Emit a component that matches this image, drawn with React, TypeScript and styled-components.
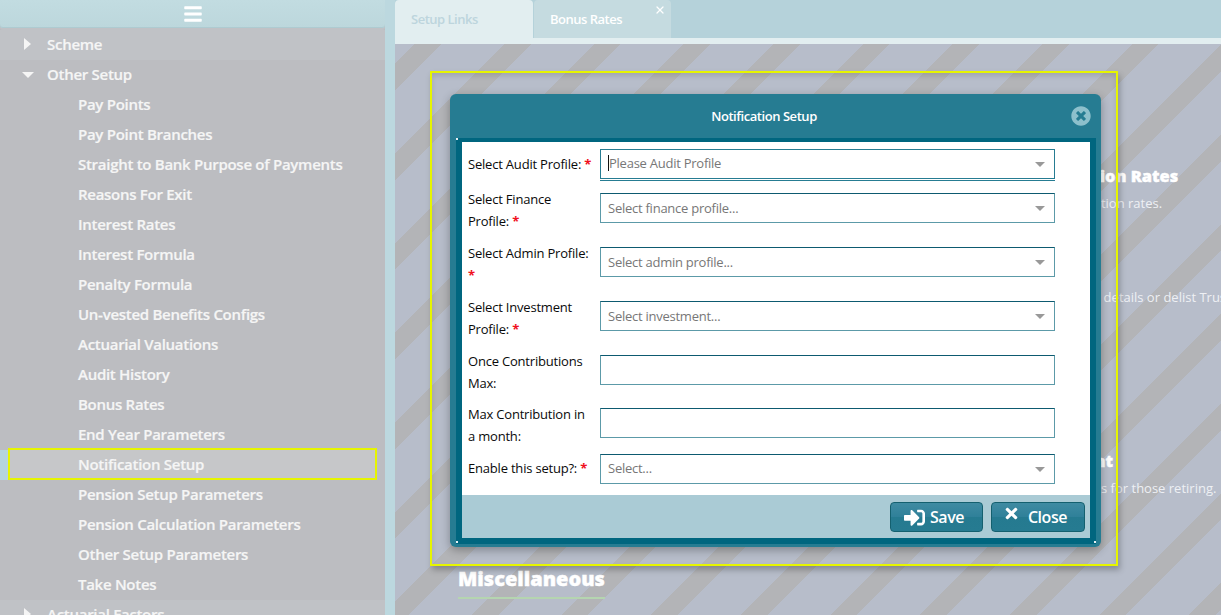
import React from "react";
import styled, { createGlobalStyle } from "styled-components";
import { FaBars, FaSignInAlt, FaTimes, FaTimesCircle } from "react-icons/fa";
import { X } from "lucide-react";

const GlobalStyle = createGlobalStyle`
  html, body {
    margin: 0;
    height: 100%;
    overflow: hidden;
    font-family: "Open Sans", "Liberation Sans", sans-serif;
  }
`;

const Page = styled.div`
  position: relative;
  display: flex;
  width: 100%;
  height: 100vh;
  overflow: hidden;
  background: #bcd8df;
`;

const Sidebar = styled.aside`
  width: 385px;
  flex: none;
  background: #bcbdc1;
  overflow: hidden;
`;

const SidebarHeader = styled.div`
  height: 28px;
  margin-bottom: 2px;
  display: flex;
  align-items: center;
  justify-content: center;
  color: #fff;
  font-size: 20px;
  background: linear-gradient(#c2dce1, #bcd7dc);
  border-radius: 0 0 3px 3px;
  box-shadow: inset 0 -1px 0 #aecbd1, 0 2px 0 #c0c2c6;
`;

const TreeRow = styled.div<{ $top?: boolean; $active?: boolean }>`
  position: relative;
  height: 30px;
  box-sizing: border-box;
  display: flex;
  align-items: center;
  padding-left: ${(p) => (p.$top ? "47px" : "78px")};
  padding-bottom: 2px;
  background: ${(p) =>
    p.$active
      ? "linear-gradient(to right, #b5d5dc 8px, #c6c7c9 8px, #c6c7c9 377px, transparent 377px)"
      : p.$top
        ? "#c0c2c6"
        : "transparent"};
  color: #f5f5f5;
  font-size: 15px;
  font-weight: 600;
  letter-spacing: -0.28px;
  -webkit-text-stroke: 0.2px #f5f5f5;
  white-space: nowrap;
`;

const OpenRow = styled(TreeRow)`
  background: transparent;
`;

const ArrowRight = styled.span`
  position: absolute;
  left: 24px;
  top: 8px;
  border-left: 7px solid #f5f5f5;
  border-top: 6px solid transparent;
  border-bottom: 6px solid transparent;
`;

const ArrowDown = styled.span`
  position: absolute;
  left: 22px;
  top: 12px;
  border-top: 6px solid #f5f5f5;
  border-left: 6px solid transparent;
  border-right: 6px solid transparent;
`;

const RowMarker = styled.span`
  position: absolute;
  left: 8px;
  right: 8px;
  top: -2px;
  bottom: 0;
  border: 2px solid #e6f500;
`;

const Main = styled.main`
  flex: 1;
  min-width: 0;
  margin-left: 10px;
  display: flex;
  flex-direction: column;
`;

const TabBar = styled.div`
  height: 38px;
  flex: none;
  display: flex;
  background: #b5d2da;
`;

const Tab = styled.div<{ $active?: boolean }>`
  position: relative;
  width: ${(p) => (p.$active ? "138px" : "137px")};
  margin-right: ${(p) => (p.$active ? "1px" : "0")};
  padding-left: 16px;
  box-sizing: border-box;
  display: flex;
  align-items: center;
  font-size: 13px;
  font-weight: 600;
  letter-spacing: -0.5px;
  color: ${(p) => (p.$active ? "#bdd5dd" : "#fff")};
  background: ${(p) => (p.$active ? "#e2eef0" : "#c5dbe0")};
  border-radius: 4px 4px 0 0;
`;

const TabClose = styled.span`
  position: absolute;
  right: 5px;
  top: 4px;
  color: #fff;
  display: flex;
`;

const TabStrip = styled.div`
  height: 6px;
  flex: none;
  background: #e2eef0;
`;

const Canvas = styled.div`
  flex: 1;
  display: grid;
  grid-template-columns: 560px 1fr;
  padding-left: 63px;
  background-color: #b7bdca;
  background-image: repeating-linear-gradient(
    135deg,
    transparent 0 14px,
    #b3b4b7 14px 33px,
    transparent 33px 63.4px
  );
`;

const CanvasColumn = styled.div`
  display: flex;
  flex-direction: column;
  white-space: nowrap;
`;

const Section = styled.section<{ $top: number }>`
  padding-top: ${(p) => p.$top}px;
`;

const SectionTitle = styled.h3`
  margin: 0 0 8px;
  font-size: 16.4px;
  line-height: 20px;
  font-weight: 800;
  color: #fff;
  -webkit-text-stroke: 0.4px #fff;
`;

const SectionText = styled.p`
  margin: 0;
  font-size: 13px;
  line-height: 18px;
  color: #eef0f4;
`;

const GroupTitle = styled.h2`
  display: inline-block;
  margin: 0;
  padding-bottom: 4px;
  font-size: 20px;
  line-height: 28px;
  font-weight: 800;
  color: #fff;
  -webkit-text-stroke: 0.4px #fff;
  border-bottom: 2px solid #b5d5b0;
`;

const MarkerFrame = styled.div`
  position: absolute;
  left: 430px;
  top: 71px;
  width: 688px;
  height: 495px;
  box-sizing: border-box;
  border: 2px solid #e6f500;
  box-shadow: 2px 4px 6px rgba(0, 0, 0, 0.25), inset 0 3px 5px rgba(0, 0, 0, 0.12);
`;

const Dialog = styled.div`
  position: absolute;
  left: 450px;
  top: 94px;
  width: 651px;
  height: 453px;
  box-sizing: border-box;
  padding: 0 5px 3px 6px;
  display: flex;
  flex-direction: column;
  background: #267c92;
  border-radius: 6px;
  box-shadow: 0 3px 10px rgba(0, 0, 0, 0.3);
`;

const DialogHeader = styled.div`
  position: relative;
  height: 44px;
  flex: none;
  display: flex;
  align-items: center;
  justify-content: center;
  padding-right: 24px;
  color: #fff;
  font-size: 13px;
  font-weight: 600;
  letter-spacing: -0.45px;
`;

const DialogClose = styled.span`
  position: absolute;
  right: 5px;
  top: 12px;
  display: flex;
  font-size: 20px;
  color: #8dc0cc;
`;

const DialogFrame = styled.div`
  position: relative;
  flex: 1;
  display: flex;
  flex-direction: column;
  border: solid #00667f;
  border-width: 4px 6px 6px 6px;
  background: #fff;
`;

const CornerDot = styled.span<{ $corner: "tl" | "bl" | "br" }>`
  position: absolute;
  width: 2px;
  height: 2px;
  background: #e8f1f3;
  ${(p) => (p.$corner === "br" ? "right: -6px;" : "left: -6px;")}
  ${(p) => (p.$corner === "tl" ? "top: -4px;" : "bottom: -5px;")}
`;

const FormBody = styled.div`
  flex: 1;
  padding: 7px 0 0 6px;
`;

const FieldRow = styled.div<{ $height: number }>`
  height: ${(p) => p.$height}px;
  display: grid;
  grid-template-columns: 125px 455px;
  column-gap: 7px;
`;

const FieldLabel = styled.label<{ $offset: number }>`
  font-size: 13px;
  line-height: 22px;
  font-weight: 500;
  letter-spacing: -0.2px;
  color: #0a0a0a;
  margin-top: ${(p) => p.$offset}px;
`;

const Required = styled.span`
  color: #f01020;
  font-weight: 700;
`;

const FieldBox = styled.div<{ $focus?: boolean; $offset?: number; $lift: number }>`
  position: relative;
  height: 30px;
  margin-top: ${(p) => p.$offset ?? 0}px;
  box-sizing: border-box;
  display: flex;
  align-items: center;
  padding: 0 0 ${(p) => p.$lift}px 7px;
  font-size: 13px;
  letter-spacing: -0.25px;
  color: #777;
  border: 1px solid ${(p) => (p.$focus ? "#267c92" : "#5c9aa8")};
  border-top-color: ${(p) => (p.$focus ? "#267c92" : "#0d5a70")};
  box-shadow: ${(p) => (p.$focus ? "0 1px 0 #fff, 0 2px 0 #267c92" : "none")};
`;

const Caret = styled.span`
  width: 1px;
  height: 16px;
  background: #111;
`;

const SelectArrow = styled.span`
  position: absolute;
  right: 9px;
  top: 12px;
  border-top: 5px solid #999;
  border-left: 5px solid transparent;
  border-right: 5px solid transparent;
`;

const DialogFooter = styled.div`
  height: 43px;
  flex: none;
  display: flex;
  justify-content: flex-end;
  align-items: flex-start;
  gap: 8px;
  padding: 7px 5px 0 0;
  box-sizing: border-box;
  background: #aacbd5;
`;

const FooterButton = styled.button<{ $width: number; $gap: number; $shift: number }>`
  width: ${(p) => p.$width}px;
  height: 30px;
  padding: 0 ${(p) => p.$shift}px 0 0;
  display: flex;
  align-items: center;
  justify-content: center;
  gap: ${(p) => p.$gap}px;
  font-family: inherit;
  font-size: 16px;
  font-weight: 600;
  letter-spacing: -0.45px;
  color: #fff;
  background: linear-gradient(#3f8ba2, #2f8099 50%, #257a90 50%, #267b91);
  border: 1px solid #14606f;
  border-radius: 4px;
`;

const RaisedIcon = styled.span`
  display: flex;
  font-size: 17px;
  margin-top: -8px;
`;

const PlainIcon = styled.span`
  display: flex;
  font-size: 21px;
`;

const setupItems = [
  "Pay Points",
  "Pay Point Branches",
  "Straight to Bank Purpose of Payments",
  "Reasons For Exit",
  "Interest Rates",
  "Interest Formula",
  "Penalty Formula",
  "Un-vested Benefits Configs",
  "Actuarial Valuations",
  "Audit History",
  "Bonus Rates",
  "End Year Parameters",
  "Notification Setup",
  "Pension Setup Parameters",
  "Pension Calculation Parameters",
  "Other Setup Parameters",
  "Take Notes",
];

type Field = {
  label: string;
  placeholder?: string;
  select?: boolean;
  required?: boolean;
  focus?: boolean;
  labelOffset: number;
  lift: number;
  height: number;
  offset: number;
};

const fields: Field[] = [
  { label: "Select Audit Profile:", placeholder: "Please Audit Profile", select: true, required: true, focus: true, labelOffset: 4, lift: 2, height: 39, offset: 0 },
  { label: "Select Finance Profile:", placeholder: "Select finance profile...", select: true, required: true, labelOffset: 0, lift: 1, height: 54, offset: 5 },
  { label: "Select Admin Profile:", placeholder: "Select admin profile...", select: true, required: true, labelOffset: 0, lift: 1, height: 54, offset: 5 },
  { label: "Select Investment Profile:", placeholder: "Select investment...", select: true, required: true, labelOffset: 0, lift: 1, height: 54, offset: 5 },
  { label: "Once Contributions Max:", labelOffset: 0, lift: 1, height: 53, offset: 5 },
  { label: "Max Contribution in a month:", labelOffset: 0, lift: 1, height: 51, offset: 5 },
  { label: "Enable this setup?:", placeholder: "Select...", select: true, required: true, labelOffset: 3, lift: 2, height: 30, offset: 0 },
];

export default function App() {
  return (
    <Page>
      <GlobalStyle />
      <Sidebar>
        <SidebarHeader>
          <FaBars />
        </SidebarHeader>
        <TreeRow $top>
          <ArrowRight />
          Scheme
        </TreeRow>
        <OpenRow $top>
          <ArrowDown />
          Other Setup
        </OpenRow>
        {setupItems.map((item) => (
          <TreeRow key={item} $active={item === "Notification Setup"}>
            {item}
            {item === "Notification Setup" && <RowMarker />}
          </TreeRow>
        ))}
        <TreeRow $top>
          <ArrowRight />
          Actuarial Factors
        </TreeRow>
      </Sidebar>

      <Main>
        <TabBar>
          <Tab $active>Setup Links</Tab>
          <Tab>
            Bonus Rates
            <TabClose>
              <X size={12} strokeWidth={2.5} />
            </TabClose>
          </Tab>
        </TabBar>
        <TabStrip />
        <Canvas>
          <CanvasColumn>
            <Section $top={521}>
              <GroupTitle>Miscellaneous</GroupTitle>
            </Section>
          </CanvasColumn>
          <CanvasColumn>
            <Section $top={122}>
              <SectionTitle>Contribution Rates</SectionTitle>
              <SectionText>View contribution rates.</SectionText>
            </Section>
            <Section $top={76}>
              <SectionText>Show Trustee details or delist Trustees</SectionText>
            </Section>
            <Section $top={145}>
              <SectionTitle>Settlement</SectionTitle>
              <SectionText>Revise settings for those retiring.</SectionText>
            </Section>
          </CanvasColumn>
        </Canvas>
      </Main>

      <MarkerFrame />
      <Dialog>
        <DialogHeader>
          Notification Setup
          <DialogClose>
            <FaTimesCircle />
          </DialogClose>
        </DialogHeader>
        <DialogFrame>
          <CornerDot $corner="tl" />
          <CornerDot $corner="bl" />
          <CornerDot $corner="br" />
          <FormBody>
            {fields.map((f) => (
              <FieldRow key={f.label} $height={f.height}>
                <FieldLabel $offset={f.labelOffset}>
                  {f.label} {f.required && <Required>*</Required>}
                </FieldLabel>
                <FieldBox $focus={f.focus} $offset={f.offset} $lift={f.lift}>
                  {f.focus && <Caret />}
                  {f.placeholder}
                  {f.select && <SelectArrow />}
                </FieldBox>
              </FieldRow>
            ))}
          </FormBody>
          <DialogFooter>
            <FooterButton $width={93} $gap={5} $shift={5}>
              <PlainIcon>
                <FaSignInAlt />
              </PlainIcon>
              Save
            </FooterButton>
            <FooterButton $width={94} $gap={8} $shift={6}>
              <RaisedIcon>
                <FaTimes />
              </RaisedIcon>
              Close
            </FooterButton>
          </DialogFooter>
        </DialogFrame>
      </Dialog>
    </Page>
  );
}
